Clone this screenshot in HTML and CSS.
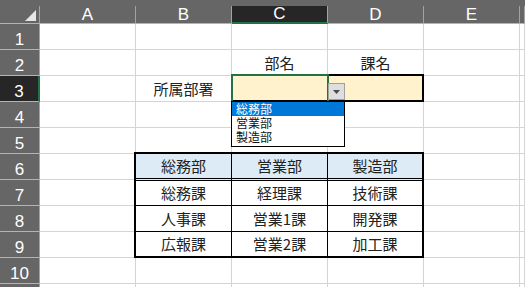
FILE: index.html
```html
<!DOCTYPE html>
<html lang="ja">
<head>
<meta charset="utf-8">
<link rel="stylesheet" href="styles.css">
</head>
<body>
<div class="sheet">
  <div class="strip"></div>

  <div class="ch corner"><svg class="tri" width="11" height="11" viewBox="0 0 11 11"><polygon points="11,0 11,11 0,11" fill="#e6e6e6"/></svg></div>
  <div class="ch">A</div>
  <div class="ch">B</div>
  <div class="ch ch-sel">C</div>
  <div class="ch">D</div>
  <div class="ch">E</div>
  <div class="ch"></div>

  <div class="rh">1</div><div class="c"></div><div class="c"></div><div class="c"></div><div class="c"></div><div class="c"></div><div class="c"></div>
  <div class="rh">2</div><div class="c"></div><div class="c"></div><div class="c">部名</div><div class="c">課名</div><div class="c"></div><div class="c"></div>
  <div class="rh rh-sel">3</div><div class="c"></div><div class="c">所属部署</div><div class="c fill c3"></div><div class="c fill d3"></div><div class="c"></div><div class="c"></div>
  <div class="rh">4</div><div class="c"></div><div class="c"></div><div class="c"></div><div class="c"></div><div class="c"></div><div class="c"></div>
  <div class="rh">5</div><div class="c"></div><div class="c"></div><div class="c"></div><div class="c"></div><div class="c"></div><div class="c"></div>
  <div class="rh">6</div><div class="c"></div><div class="c"></div><div class="c"></div>
  <div class="rh">7</div><div class="c"></div><div class="c"></div><div class="c"></div>
  <div class="rh">8</div><div class="c"></div><div class="c"></div><div class="c"></div>
  <div class="rh">9</div><div class="c"></div><div class="c"></div><div class="c"></div>
  <div class="rh">10</div><div class="c"></div><div class="c"></div><div class="c"></div><div class="c"></div><div class="c"></div><div class="c"></div>
  <div class="rh"></div><div class="c"></div><div class="c"></div><div class="c"></div><div class="c"></div><div class="c"></div><div class="c"></div>

  <div class="table">
    <div class="t th">総務部</div><div class="t th">営業部</div><div class="t th last">製造部</div>
    <div class="t">総務課</div><div class="t">経理課</div><div class="t last">技術課</div>
    <div class="t">人事課</div><div class="t">営業1課</div><div class="t last">開発課</div>
    <div class="t bottom">広報課</div><div class="t bottom">営業2課</div><div class="t bottom last">加工課</div>
  </div>

  <div class="range"></div>
  <div class="active"></div>

  <div class="dd-btn"><svg width="7" height="4" viewBox="0 0 7 4"><polygon points="0,0 7,0 3.5,4" fill="#4a4a4a"/></svg></div>
  <div class="dd-list">
    <div class="dd-item sel">総務部</div>
    <div class="dd-item">営業部</div>
    <div class="dd-item">製造部</div>
  </div>
</div>
</body>
</html>
```

FILE: styles.css
```css
html, body {
  margin: 0;
  padding: 0;
  background: #ffffff;
  overflow: hidden;
}

.sheet {
  position: relative;
  width: 525px;
  height: 287px;
  display: grid;
  grid-template-columns: 40px repeat(5, 96px) 1fr;
  grid-template-rows: 6px 18px repeat(11, 26px);
  font-family: "Noto Sans CJK JP", "Noto Sans", sans-serif;
  color: #222;
  overflow: hidden;
}

.strip {
  grid-column: 1 / -1;
  background: #666666;
}

.ch {
  background: #666666;
  border-right: 1px solid #a3a3a3;
  border-bottom: 1px solid #b4b4b4;
  color: #ffffff;
  font-family: "Liberation Sans", Arial, sans-serif;
  font-size: 17px;
  line-height: 17px;
  display: flex;
  align-items: flex-end;
  justify-content: center;
}

.corner {
  justify-content: flex-end;
  align-items: flex-start;
}

.tri {
  margin: 4px 3px 0 0;
}

.ch-sel {
  background: #262626;
  border-bottom: 2px solid #217346;
}

.rh {
  background: #666666;
  border-right: 1px solid #a3a3a3;
  border-bottom: 1px solid #b4b4b4;
  color: #ffffff;
  font-family: "Liberation Sans", Arial, sans-serif;
  font-size: 17px;
  line-height: 17px;
  display: flex;
  align-items: flex-end;
  justify-content: center;
  padding-bottom: 1px;
}

.rh-sel {
  background: #262626;
  border-right: 2px solid #217346;
}

.c {
  border-right: 1px solid #d4d4d4;
  border-bottom: 1px solid #d4d4d4;
  font-size: 15px;
  line-height: 20px;
  display: flex;
  align-items: flex-end;
  justify-content: center;
  padding-bottom: 2px;
}

.fill {
  background: #fff2cc;
}

.c3 {
  grid-column: 4;
  grid-row: 5;
}

.d3 {
  grid-column: 5;
  grid-row: 5;
}

.table {
  grid-column: 3 / 6;
  grid-row: 8 / 12;
  margin: -2px 0 0 -2px;
  border: 2px solid #000;
  background: #fff;
  display: grid;
  grid-template-columns: 96px 96px 1fr;
  grid-template-rows: 27px 25px 26px 1fr;
}

.t {
  border-right: 1px solid #000;
  border-bottom: 1px solid #000;
  font-size: 15px;
  line-height: 20px;
  display: flex;
  align-items: center;
  justify-content: center;
}

.th {
  background: #ddebf7;
  border-bottom: 3px double #000;
}

.last {
  border-right: none;
}

.bottom {
  border-bottom: none;
}

.range {
  grid-column: 4 / 6;
  grid-row: 5;
  margin: -2px 0 0 -1px;
  border: 2px solid #000;
}

.active {
  grid-column: 4;
  grid-row: 5;
  margin: -2px -1px -1px -1px;
  border: 2px solid #217346;
}

.dd-btn {
  position: absolute;
  left: 328px;
  top: 83px;
  width: 15px;
  height: 15px;
  background: #dedede;
  border: 1px solid #a0a0a0;
  display: flex;
  align-items: center;
  justify-content: center;
}

.dd-list {
  position: absolute;
  left: 231px;
  top: 101px;
  width: 112px;
  height: 44px;
  background: #fff;
  border: 1px solid #000;
  display: flex;
  flex-direction: column;
}

.dd-item {
  height: 14px;
  font-size: 12px;
  line-height: 14px;
  padding-left: 4px;
  color: #111;
  white-space: nowrap;
}

.dd-item.sel {
  background: #0078d7;
  color: #ffffff;
}
```
